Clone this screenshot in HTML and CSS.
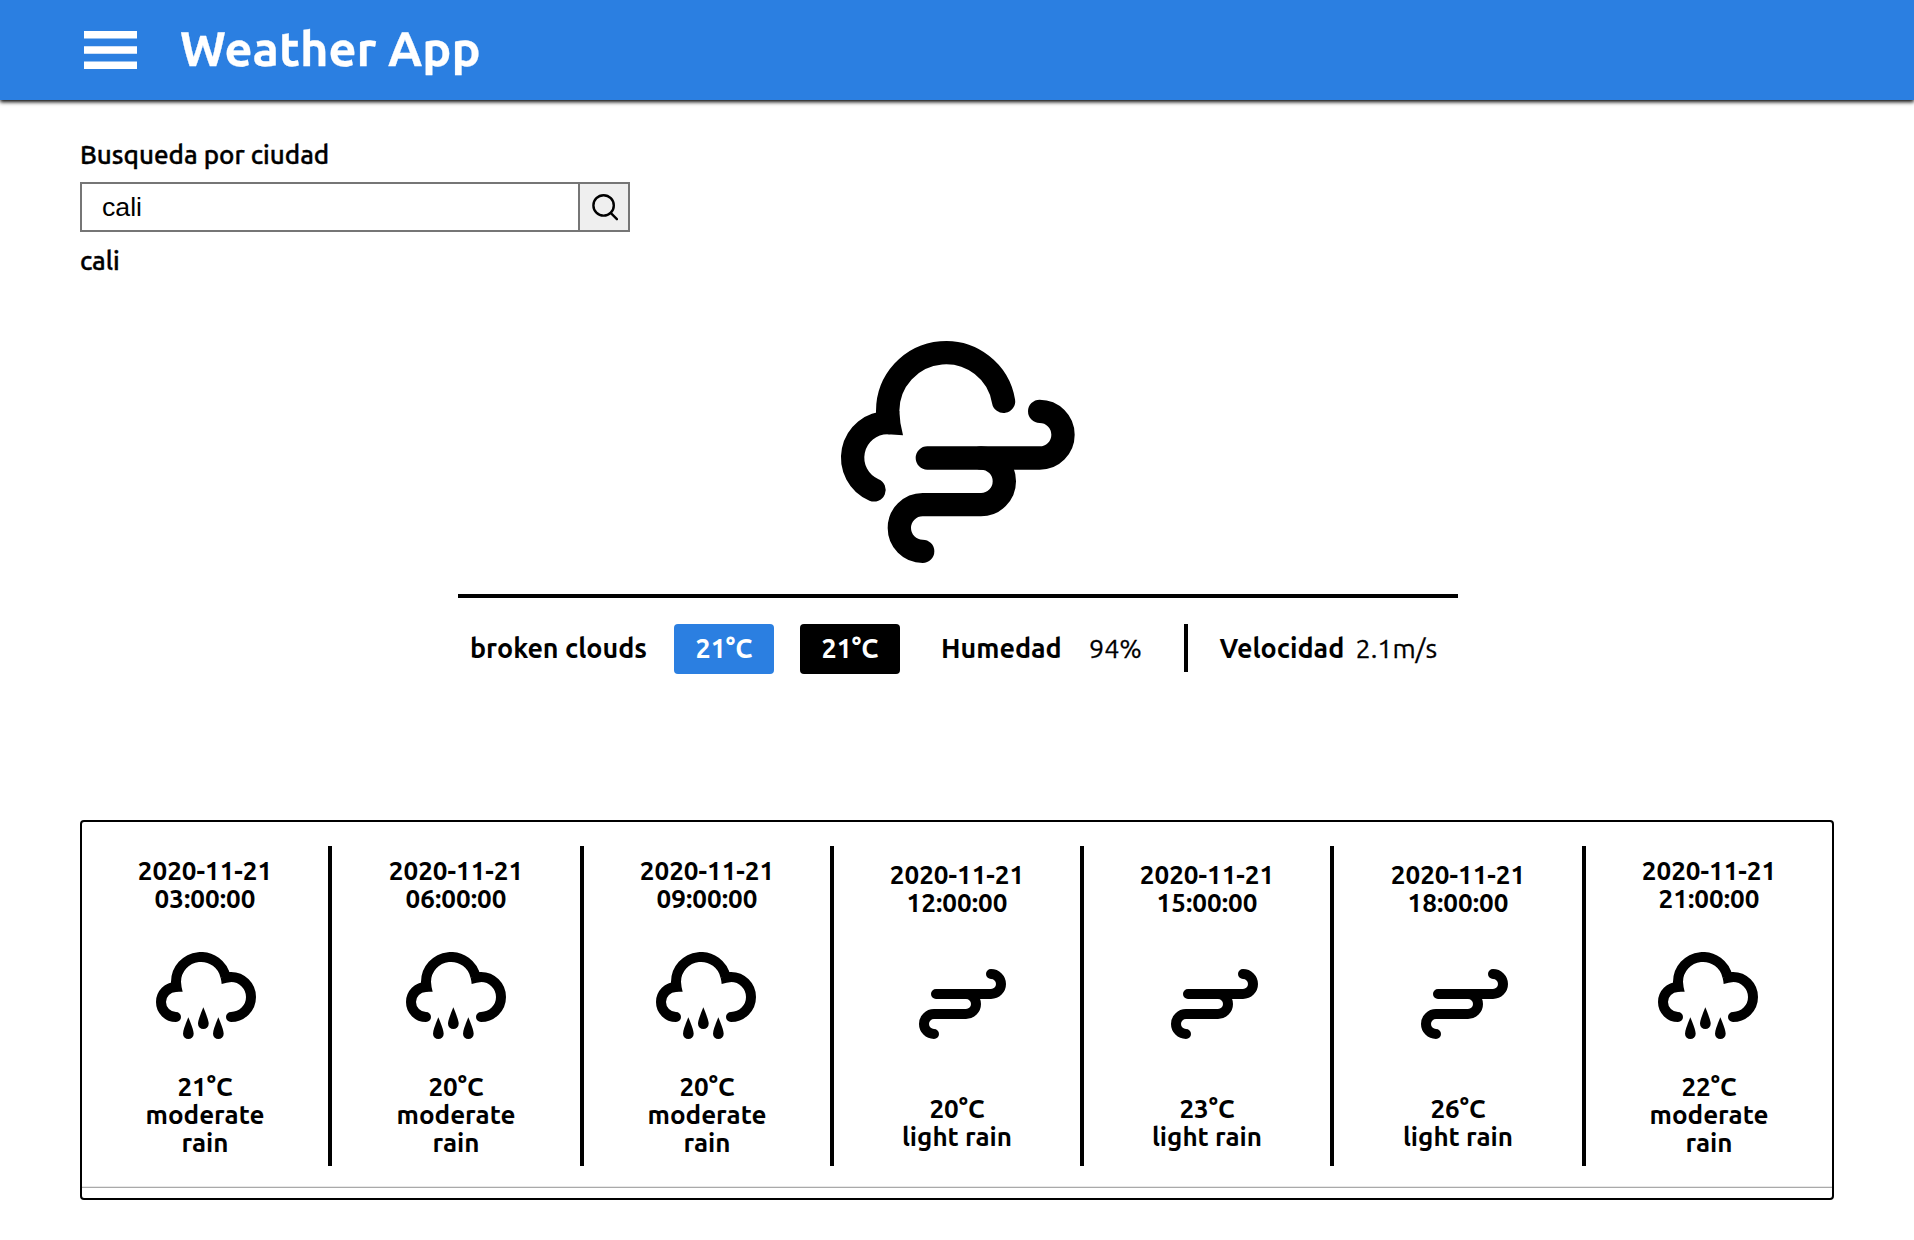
FILE: index.html
```html
<!DOCTYPE html>
<html lang="es">
<head>
<meta charset="utf-8">
<title>Weather App</title>
<link rel="stylesheet" href="styles.css">
</head>
<body>
<header class="topbar">
  <svg class="menu" viewBox="0 0 53 38" aria-hidden="true"><path d="M0 0h53v7.6H0zM0 15.2h53v7.6H0zM0 30.4h53v7.6H0z"/></svg>
  <h1 class="title">Weather App</h1>
</header>
<main class="page">
  <form class="search">
    <label class="label" for="city">Busqueda por ciudad</label>
    <div class="field">
      <input class="input" id="city" type="text" value="cali">
      <button class="button" type="button" aria-label="Buscar">
        <svg class="glass" viewBox="0 0 28 28"><circle cx="13.6" cy="12.4" r="10.2"/><path d="M20.9 20.2l6 6"/></svg>
      </button>
    </div>
    <p class="label city">cali</p>
  </form>
  <section class="current">
    <svg class="current-icon" viewBox="64 63 701 666" aria-hidden="true">
      <g class="stroke-large">
        <path d="M204 273A175 175 0 0 1 551.6 244"/>
        <path d="M204 308A105 105 0 0 0 163 509.7"/>
        <path d="M323 414H660A70 70 0 0 0 660 274"/>
        <path d="M484 414A70 70 0 0 1 484 554H309A70 70 0 0 0 309 694"/>
      </g>
      <path d="M169 278V273H239Q240 310 250 346L204 343Z"/>
    </svg>
    <div class="summary">
      <span class="desc">broken clouds</span>
      <span class="badge badge-blue">21°C</span>
      <span class="badge badge-black">21°C</span>
      <b class="humidity">Humedad</b>
      <span class="humidity-value">94%</span>
      <span class="speed"><b>Velocidad</b> <span class="speed-value">2.1m/s</span></span>
    </div>
  </section>
  <section class="forecast">
    <svg class="defs" aria-hidden="true">
      <symbol id="rain" viewBox="258 426 300 261">
        <g class="stroke-small">
          <path d="M318 531A45 45 0 0 0 318 621"/>
          <path d="M483 501A60 60 0 0 1 483 621"/>
        </g>
        <path class="stroke-butt" d="M318 516A75 75 0 0 1 466.5 501"/>
        <path d="M303 515H333Q334 532 338 545H316V519H303Z"/>
        <path d="M479 486H485V516Q470 517 455 522Q454 512 452 505Z"/>
        <path d="M355 622Q371 660 371 671A16 16 0 0 1 339 671Q339 660 355 622Z"/>
        <path d="M400 592Q416 630 416 641A16 16 0 0 1 384 641Q384 630 400 592Z"/>
        <path d="M445 622Q461 660 461 671A16 16 0 0 1 429 671Q429 660 445 622Z"/>
      </symbol>
      <symbol id="wind" viewBox="258 426 300 261">
        <g class="stroke-small">
          <path d="M348 552H513A30 30 0 0 0 513 492"/>
          <path d="M438 552A30 30 0 0 1 438 612H342A30 30 0 0 0 342 672"/>
        </g>
      </symbol>
    </svg>
    <div class="cards">
      <article class="card"><p class="date">2020-11-21 03:00:00</p><svg class="icon"><use href="#rain"/></svg><p class="info">21°C<br>moderate rain</p></article>
      <article class="card"><p class="date">2020-11-21 06:00:00</p><svg class="icon"><use href="#rain"/></svg><p class="info">20°C<br>moderate rain</p></article>
      <article class="card"><p class="date">2020-11-21 09:00:00</p><svg class="icon"><use href="#rain"/></svg><p class="info">20°C<br>moderate rain</p></article>
      <article class="card light"><p class="date">2020-11-21 12:00:00</p><svg class="icon"><use href="#wind"/></svg><p class="info">20°C<br>light rain</p></article>
      <article class="card light"><p class="date">2020-11-21 15:00:00</p><svg class="icon"><use href="#wind"/></svg><p class="info">23°C<br>light rain</p></article>
      <article class="card light"><p class="date">2020-11-21 18:00:00</p><svg class="icon"><use href="#wind"/></svg><p class="info">26°C<br>light rain</p></article>
      <article class="card"><p class="date">2020-11-21 21:00:00</p><svg class="icon"><use href="#rain"/></svg><p class="info">22°C<br>moderate rain</p></article>
    </div>
    <div class="track"></div>
  </section>
</main>
</body>
</html>
```
FILE: styles.css
```css
* { box-sizing: border-box; }

body {
  margin: 0;
  background: #fff;
  color: #000;
  font-family: Ubuntu, "Noto Sans", sans-serif;
  font-size: 26px;
  line-height: 28px;
}

h1, p { margin: 0; }

.topbar {
  display: flex;
  align-items: center;
  height: 100px;
  padding-left: 83.5px;
  background: #2b7fe1;
  box-shadow: 0 2px 4px #000;
}

.menu { width: 53px; height: 38px; fill: #fff; }

.title {
  margin: 0 0 4px 43.5px;
  color: #fff;
  font-size: 48.7px;
  line-height: 56px;
  -webkit-text-stroke: 0.3px;
}

.page { padding: 0 80px; }

.search {
  display: flex;
  flex-direction: column;
  width: 550px;
  padding-top: 41px;
}

.label { font-weight: 500; -webkit-text-stroke: 0.4px; }

.field {
  display: flex;
  height: 50px;
  margin-top: 13px;
}

.input {
  flex: 1;
  min-width: 0;
  padding: 0 20px;
  border: 2px solid #767676;
  border-right: 0;
  outline: 0;
  font: 26.67px/46px "Liberation Sans", Arial, sans-serif;
}

.button {
  display: flex;
  align-items: center;
  justify-content: center;
  width: 52px;
  padding: 0;
  border: 2px solid #767676;
  background: #efefef;
}

.glass {
  width: 28px;
  height: 28px;
  fill: none;
  stroke: #000;
  stroke-width: 2.4;
  stroke-linecap: round;
}

.city { margin-top: 15px; }

.current { width: 1000px; margin: 66px auto 0 378px; }

.current-icon {
  display: block;
  width: 233.7px;
  height: 222px;
  margin: 0 auto;
  overflow: visible;
}

.stroke-large { fill: none; stroke: #000; stroke-width: 70; stroke-linecap: round; }
.stroke-small { fill: none; stroke: #000; stroke-width: 30; stroke-linecap: round; }
.stroke-butt { fill: none; stroke: #000; stroke-width: 30; }

.summary {
  display: flex;
  align-items: flex-start;
  margin-top: 31px;
  padding: 26px 0 0 12px;
  border-top: 4px solid #000;
  font-size: 26.9px;
  line-height: 48px;
  white-space: nowrap;
}

.desc { width: 204px; font-weight: 700; }

.badge {
  width: 100px;
  height: 50px;
  margin-right: 26px;
  border-radius: 4px;
  color: #fff;
  font-weight: 700;
  text-align: center;
}

.badge-blue { background: #2b7fe1; }
.badge-black { background: #000; }

.humidity { width: 148px; margin-left: 15px; }
.humidity-value { width: 95px; -webkit-text-stroke: 0.3px; }

.speed {
  height: 48px;
  padding-left: 31.5px;
  border-left: 4px solid #000;
}

.speed-value { margin-left: 5px; -webkit-text-stroke: 0.3px; }

.forecast {
  height: 380px;
  margin-top: 146px;
  border: 2px solid #000;
  border-radius: 4px;
  overflow: hidden;
}

.defs { position: absolute; width: 0; height: 0; }

.cards {
  display: grid;
  grid-template-columns: 250px 252px 250px 250px 250px 252px 250px;
  align-items: start;
  height: 364px;
  padding-top: 24px;
}

.card {
  display: flex;
  flex-direction: column;
  align-items: center;
  height: 320px;
  padding: 11px 40px 0;
  border-right: 4px solid #000;
  font-weight: 700;
  text-align: center;
}

.card:last-child { border-color: transparent; }

.date { width: 150px; }

.icon { width: 100px; height: 87px; margin: 39px 2px 0 0; flex: none; }
.card:nth-child(4n+1) .icon { margin-right: -2px; }
.card:nth-child(4n+2) .icon { margin-right: 0; }

.info { width: 130px; margin-top: 34px; }

.light { padding-top: 15px; }
.light .icon { margin-top: 35px; }
.light .info { margin-top: 56px; }

.track {
  height: 12px;
  border-top: 1px solid #e8e8e8;
  box-shadow: inset 0 1px #a9a9a9;
}
```
